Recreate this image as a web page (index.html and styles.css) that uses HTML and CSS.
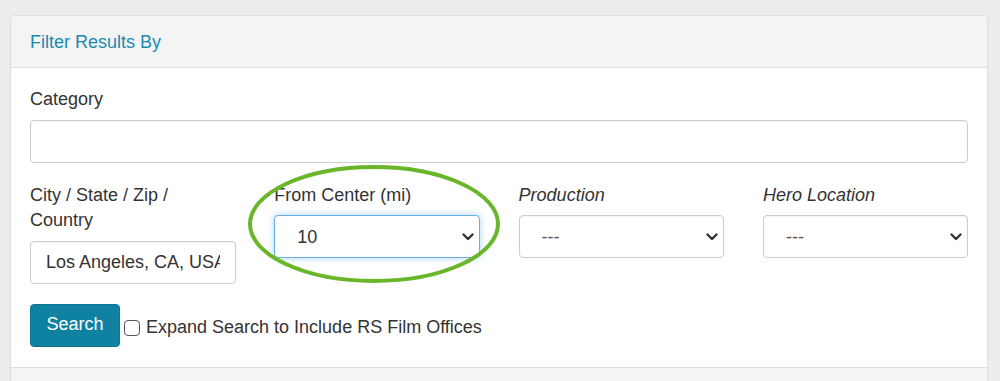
FILE: index.html
```html
<!DOCTYPE html>
<html lang="en">
<head>
  <meta charset="UTF-8" />
  <title>Filter Results</title>
  <link rel="stylesheet" href="styles.css">
</head>
<body>

  <div class="panel">
    <div class="panel-heading">
      <h3 class="panel-title">Filter Results By</h3>
    </div>

    <div class="panel-body">
      <form class="filter-form">
        <div class="form-group">
          <label for="category">Category</label>
          <input type="text" id="category" class="form-control">
        </div>

        <div class="filter-row">
          <div class="form-group">
            <label for="city">City / State / Zip / Country</label>
            <input type="text" id="city" class="form-control" value="Los Angeles, CA, USA">
          </div>

          <div class="form-group">
            <label for="radius">From Center (mi)</label>
            <div class="select-wrap">
              <select id="radius" class="form-control focused">
                <option>10</option>
                <option>25</option>
                <option>50</option>
              </select>
              <svg class="chevron" width="12" height="8" viewBox="0 0 12 8"><path d="M1.5 1.5 6 6l4.5-4.5" fill="none" stroke="#333" stroke-width="2.4" stroke-linecap="round" stroke-linejoin="round"/></svg>
            </div>
          </div>

          <div class="form-group">
            <label for="production" class="italic">Production</label>
            <div class="select-wrap">
              <select id="production" class="form-control muted">
                <option>---</option>
              </select>
              <svg class="chevron" width="12" height="8" viewBox="0 0 12 8"><path d="M1.5 1.5 6 6l4.5-4.5" fill="none" stroke="#333" stroke-width="2.4" stroke-linecap="round" stroke-linejoin="round"/></svg>
            </div>
          </div>

          <div class="form-group">
            <label for="hero" class="italic">Hero Location</label>
            <div class="select-wrap">
              <select id="hero" class="form-control muted">
                <option>---</option>
              </select>
              <svg class="chevron" width="12" height="8" viewBox="0 0 12 8"><path d="M1.5 1.5 6 6l4.5-4.5" fill="none" stroke="#333" stroke-width="2.4" stroke-linecap="round" stroke-linejoin="round"/></svg>
            </div>
          </div>
        </div>

        <div class="search-row">
          <button type="submit" class="btn-search">Search</button>
          <label class="check-label"><input type="checkbox" class="check"> Expand Search to Include RS Film Offices</label>
        </div>
      </form>

      <!-- annotation circle around the distance dropdown -->
      <svg class="highlight" width="256" height="122" viewBox="0 0 256 122">
        <ellipse cx="128" cy="61" rx="124" ry="57" fill="none" stroke="#6ab62a" stroke-width="4"/>
      </svg>
    </div>

    <div class="panel-footer"></div>
  </div>

</body>
</html>
```

FILE: styles.css
```css
* { box-sizing: border-box; }
body {
  margin: 0;
  background: #ececec;
  font-family: "Liberation Sans", Arial, sans-serif;
  font-size: 18px;
  line-height: 25.5px;
  color: #333;
  padding: 15px 12px 0 10px;
}
.panel {
  background: #fff;
  border: 1px solid #ddd;
  border-bottom: none;
  border-radius: 5px 5px 0 0;
}
.panel-heading {
  background: #f4f4f4;
  border-bottom: 1px solid #ddd;
  border-radius: 5px 5px 0 0;
  height: 52px;
  padding: 14px 19px 0;
}
.panel-title {
  margin: 0;
  font-size: 18px;
  font-weight: normal;
  line-height: 24px;
  color: #1a8bb0;
}
.panel-body {
  position: relative;
  padding: 19px 19px 20px;
}
.form-group { margin-bottom: 20px; }
.form-group label {
  display: block;
  margin-bottom: 7px;
  padding-right: 12px;
}
.italic { font-style: italic; }
.form-control {
  display: block;
  width: 100%;
  height: 43px;
  padding: 0 15px 0 15px;
  border: 1px solid #ccc;
  border-radius: 4px;
  background: #fff;
  font-family: inherit;
  font-size: 18px;
  color: #333;
  box-shadow: inset 0 1px 1px rgba(0, 0, 0, 0.05);
}
.filter-row {
  display: grid;
  grid-template-columns: repeat(4, 205.5px);
  column-gap: 38.8px;
  align-items: start;
}
.select-wrap { position: relative; }
.select-wrap select {
  appearance: none;
  -webkit-appearance: none;
  height: 43px;
  padding-left: 22px;
}
.select-wrap select.focused {
  border-color: #66afe9;
  box-shadow: 0 0 7px rgba(102, 175, 233, 0.55);
  outline: none;
}
.select-wrap select.muted { color: #555; }
.chevron {
  position: absolute;
  right: 6px;
  top: 18px;
  pointer-events: none;
}
.search-row {
  display: flex;
  align-items: center;
}
.btn-search {
  width: 90px;
  height: 43px;
  padding-bottom: 2px;
  border: 1px solid #0d7592;
  border-radius: 4px;
  background: #0f82a1;
  color: #fff;
  font-family: inherit;
  font-size: 18px;
  cursor: pointer;
}
.check-label {
  display: flex;
  align-items: center;
  margin-left: 4px;
  padding-top: 5px;
}
.check {
  appearance: none;
  -webkit-appearance: none;
  width: 16px;
  height: 16px;
  margin: 0 6px 0 0;
  border: 1px solid #555;
  border-radius: 4px;
  background: #fff;
}
.highlight {
  position: absolute;
  left: 235px;
  top: 95px;
}
.panel-footer {
  height: 20px;
  background: #f4f4f4;
  border-top: 1px solid #ddd;
}
```
